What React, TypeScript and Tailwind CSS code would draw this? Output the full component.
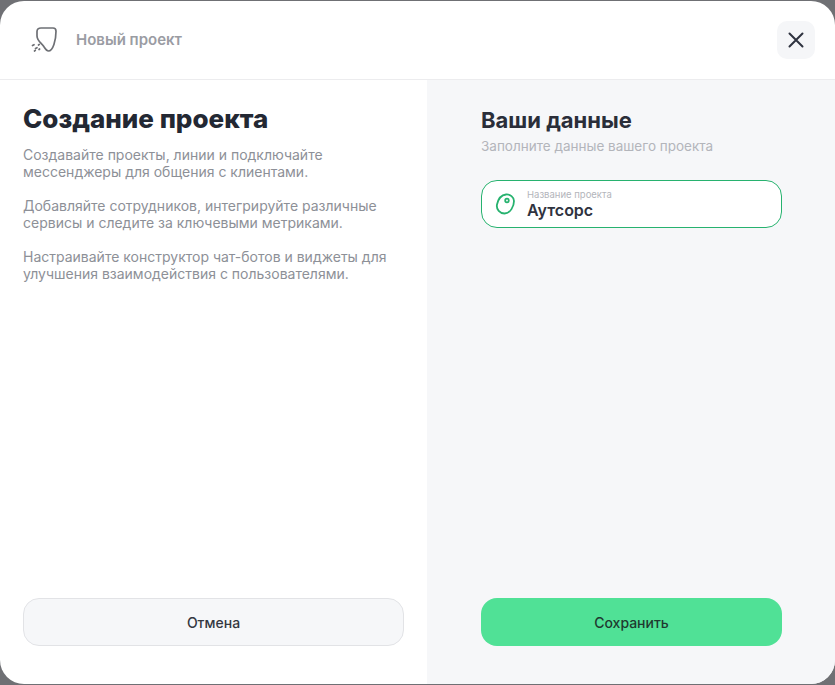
import React from 'react';

const App: React.FC = () => {
  return (
    <div className="w-[835px] h-[685px] bg-[#6f7074] pt-px overflow-hidden font-['Inter',sans-serif]">
      <div className="h-[683px] bg-white rounded-[24px] overflow-hidden flex flex-col">
        <div className="h-[78px] shrink-0 flex items-center justify-between pl-[30px] pr-[20px] pb-[1px]">
          <div className="flex items-center gap-[18px]">
            <svg width="28" height="28" viewBox="0 0 28 28" fill="none" stroke="#6e7075" strokeWidth="1.7" strokeLinecap="round" strokeLinejoin="round">
              <path d="M7 5.5C7 3.2 8.5 2 11 2h12c2 0 3 1.2 3 3.2 0 9-3 19.8-7.5 19.8-2 0-3.2-2-4.7-4.5C12 17.300 7 15 7 10z" />
              <path d="M2.500 19.500l1.500-.8M8.500 19l.8-.6M5.500 22.500l1.500-.8M4.500 25l.8-.6M9 23.500l.6-.5" />
            </svg>
            <span className="text-[15px] leading-[18px] font-semibold text-[#9a9ca3]">Новый проект</span>
          </div>
          <button className="w-[38px] h-[38px] rounded-[10px] bg-[#f5f6f8] flex items-center justify-center">
            <svg width="18" height="18" viewBox="0 0 18 18" fill="none" stroke="#2f3340" strokeWidth="2" strokeLinecap="round">
              <path d="M2.500 2.500l13 13M15.500 2.500l-13 13" />
            </svg>
          </button>
        </div>
        <div className="flex-1 flex border-t border-[#ececee]">
          <div className="w-[427px] shrink-0 flex flex-col justify-between pl-[23px] pr-[23px] pt-[22px] pb-[38px]">
            <div>
              <h1 className="text-[26px] leading-[34px] font-extrabold text-[#232833]">Создание проекта</h1>
              <div className="mt-[10px] text-[14px] leading-[17px] text-[#8d9097]">
                <p className="mb-[17px]">Создавайте проекты, линии и подключайте<br />мессенджеры для общения с клиентами.</p>
                <p className="mb-[17px]">Добавляйте сотрудников, интегрируйте различные<br />сервисы и следите за ключевыми метриками.</p>
                <p>Настраивайте конструктор чат-ботов и виджеты для<br />улучшения взаимодействия с пользователями.</p>
              </div>
            </div>
            <button className="w-[381px] h-[48px] rounded-[16px] bg-[#f6f7f9] border border-[#e2e3e6] text-[14px] font-medium text-[#343741]">Отмена</button>
          </div>
          <div className="flex-1 bg-[#f6f7f9] flex flex-col justify-between pl-[54px] pr-[53px] pt-[26px] pb-[38px]">
            <div>
              <h2 className="text-[22px] leading-[28px] font-bold text-[#2a2e39]">Ваши данные</h2>
              <p className="mt-[4px] text-[13.500px] leading-[17px] text-[#b3b5bb]">Заполните данные вашего проекта</p>
              <div className="mt-[25px] h-[48px] rounded-[16px] bg-white border border-[#27b26f] flex items-center pl-[12px]">
                <svg width="22" height="24" viewBox="0 0 22 24" fill="none" stroke="#27b26f" strokeWidth="1.8">
                  <path d="M3 12.500C4 8 7 3 12 2.500c4-.4 8 2.500 8 6.500 0 5-3.500 12.500-9.500 12.500C6 21.500 2 17.500 3 12.500z" />
                  <circle cx="13" cy="8.500" r="1.800" />
                </svg>
                <div className="ml-[11px] flex flex-col">
                  <span className="text-[9.500px] leading-[11px] text-[#b3b5bb]">Название проекта</span>
                  <span className="text-[16px] leading-[20px] font-semibold text-[#2f3340]">Аутсорс</span>
                </div>
              </div>
            </div>
            <button className="w-full h-[48px] rounded-[16px] bg-[#50e196] text-[14px] font-medium text-[#1f3a30]">Сохранить</button>
          </div>
        </div>
      </div>
    </div>
  );
};

export default App;
